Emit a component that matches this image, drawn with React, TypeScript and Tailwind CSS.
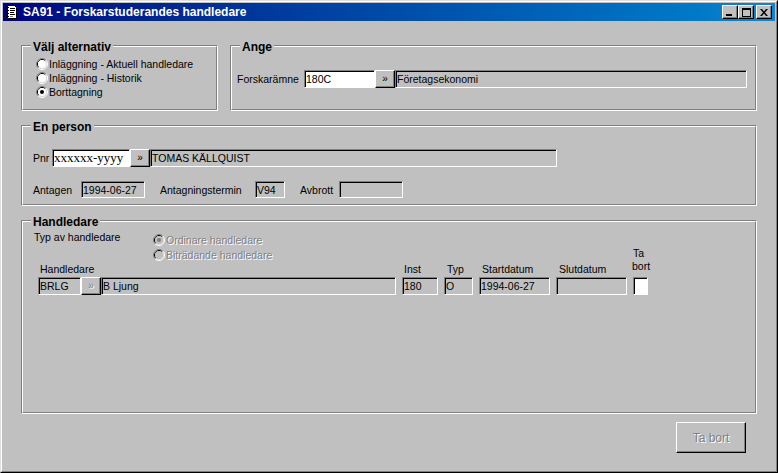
import React from "react";

const sunken =
  "border border-t-[#808080] border-l-[#808080] border-r-white border-b-white shadow-[inset_1px_1px_0_#000]";
const raised =
  "border border-t-white border-l-white border-r-black border-b-black shadow-[inset_-1px_-1px_0_#808080]";

function Field({
  className = "",
  white = false,
  children,
}: {
  className?: string;
  white?: boolean;
  children?: React.ReactNode;
}) {
  return (
    <div
      className={`${sunken} ${white ? "bg-white" : "bg-[#c0c0c0]"} flex items-center pl-[1px] overflow-hidden whitespace-nowrap shrink-0 ${className}`}
    >
      {children}
    </div>
  );
}

function MoreBtn({ disabled = false }: { disabled?: boolean }) {
  return (
    <div
      className={`${raised} bg-[#c0c0c0] w-[20px] h-[18px] shrink-0 flex items-center justify-center text-[10px] leading-none ${
        disabled ? "text-[#808080] [text-shadow:1px_1px_0_#fff]" : "text-black"
      }`}
    >
      »
    </div>
  );
}

function Radio({ checked = false, disabled = false }: { checked?: boolean; disabled?: boolean }) {
  return (
    <svg width="12" height="12" viewBox="0 0 12 12" className="shrink-0">
      <path d="M2.11 9.89A5.5 5.5 0 0 1 9.89 2.11" stroke="#808080" fill="none" />
      <path d="M9.89 2.11A5.5 5.5 0 0 1 2.11 9.89" stroke="#fff" fill="none" />
      <path d="M2.82 9.18A4.5 4.5 0 0 1 9.18 2.82" stroke="#000" fill="none" />
      <path d="M9.18 2.82A4.5 4.5 0 0 1 2.82 9.18" stroke="#dfdfdf" fill="none" />
      <circle cx="6" cy="6" r="4" fill={disabled ? "#c0c0c0" : "#fff"} />
      {checked && <circle cx="6" cy="6" r="2" fill={disabled ? "#808080" : "#000"} />}
    </svg>
  );
}

function Group({
  title,
  className = "",
  children,
}: {
  title: string;
  className?: string;
  children?: React.ReactNode;
}) {
  return (
    <div
      className={`border border-t-[#808080] border-l-[#808080] border-r-white border-b-white shrink-0 ${className}`}
    >
      <div className="h-full flex flex-col border border-t-white border-l-white border-r-[#808080] border-b-[#808080]">
        <span className="-mt-[7px] ml-[8px] px-[2px] self-start bg-[#c0c0c0] text-[12px] leading-[14px] font-bold">
          {title}
        </span>
        {children}
      </div>
    </div>
  );
}

function TitleBar() {
  return (
    <div className="h-[18px] shrink-0 flex items-center bg-linear-to-r from-[#000080] to-[#1084d0] pl-[1px] pr-[3px]">
      <svg width="16" height="16" viewBox="0 0 16 16" className="shrink-0">
        <path d="M3.5 1.5h7l2 2v11h-9z" fill="#fff" stroke="#000" />
        <rect x="2" y="3" width="3" height="1" fill="#000" />
        <rect x="2" y="6" width="3" height="1" fill="#000" />
        <rect x="2" y="9" width="3" height="1" fill="#000" />
        <rect x="2" y="12" width="3" height="1" fill="#000" />
        <rect x="6" y="4" width="5" height="1" fill="#000" />
        <rect x="6" y="6" width="5" height="1" fill="#000" />
        <rect x="6" y="8" width="4" height="1" fill="#000" />
        <rect x="6" y="10" width="5" height="1" fill="#000" />
        <rect x="6" y="12" width="3" height="1" fill="#808080" />
      </svg>
      <span className="ml-[3px] text-white font-bold text-[12px] leading-none whitespace-nowrap">
        SA91 - Forskarstuderandes handledare
      </span>
      <div className="ml-auto flex items-center">
        <div className={`${raised} bg-[#c0c0c0] w-[16px] h-[14px] flex items-end justify-start pl-[3px] pb-[2px]`}>
          <svg width="6" height="2" viewBox="0 0 6 2">
            <rect width="6" height="2" fill="#000" />
          </svg>
        </div>
        <div className={`${raised} bg-[#c0c0c0] w-[16px] h-[14px] flex items-center justify-center`}>
          <svg width="9" height="9" viewBox="0 0 9 9">
            <path d="M0 0h9v9H0zM1 2v6h7V2z" fill="#000" fillRule="evenodd" />
          </svg>
        </div>
        <div className={`${raised} bg-[#c0c0c0] w-[16px] h-[14px] ml-[2px] flex items-center justify-center`}>
          <svg width="8" height="7" viewBox="0 0 8 7">
            <path d="M0 0h2l2 2.4L6 0h2L5 3.5 8 7H6L4 4.6 2 7H0l3-3.5z" fill="#000" />
          </svg>
        </div>
      </div>
    </div>
  );
}

const options = [
  { label: "Inläggning - Aktuell handledare", checked: false },
  { label: "Inläggning - Historik", checked: false },
  { label: "Borttagning", checked: true },
];

export default function App() {
  return (
    <div className="w-[778px] h-[473px] bg-[#c0c0c0] font-['Liberation_Sans',Arial,sans-serif] text-[10.5px] leading-[12px] text-black border border-t-[#dfdfdf] border-l-[#dfdfdf] border-r-black border-b-black">
      <div className="h-full flex flex-col border border-t-white border-l-white border-r-[#808080] border-b-[#808080] p-[1px]">
        <TitleBar />

        <div className="flex flex-col px-[18px] pt-[24px]">
          {/* row 1 */}
          <div className="flex gap-[12px]">
            <Group title="Välj alternativ" className="w-[197px] h-[66px]">
              <div className="flex flex-col pt-[3px] pl-[13px]">
                {options.map((o) => (
                  <div key={o.label} className="h-[14px] flex items-center gap-[1px] whitespace-nowrap">
                    <Radio checked={o.checked} />
                    <span>{o.label}</span>
                  </div>
                ))}
              </div>
            </Group>

            <Group title="Ange" className="flex-1 h-[66px]">
              <div className="flex items-center pt-[16px] pl-[5px]">
                <span className="w-[67px] shrink-0">Forskarämne</span>
                <Field white className="w-[71px] h-[18px]">
                  180C
                </Field>
                <MoreBtn />
                <Field className="w-[352px] h-[18px]">Företagsekonomi</Field>
              </div>
            </Group>
          </div>

          {/* En person */}
          <Group title="En person" className="mt-[14px] h-[81px]">
            <div className="flex flex-col pt-[15px] pl-[10px]">
              <div className="flex items-center">
                <span className="w-[19px] shrink-0">Pnr</span>
                <Field white className="w-[78px] h-[18px] font-['Liberation_Serif',serif] text-[13px]">
                  xxxxxx-yyyy
                </Field>
                <MoreBtn />
                <Field className="w-[407px] h-[18px]">TOMAS KÄLLQUIST</Field>
              </div>
              <div className="flex items-center mt-[14px]">
                <span className="w-[48px] shrink-0">Antagen</span>
                <Field className="w-[64px] h-[17px]">1994-06-27</Field>
                <span className="w-[95px] shrink-0 pl-[15px] box-content">Antagningstermin</span>
                <Field className="w-[30px] h-[17px]">V94</Field>
                <span className="w-[39px] shrink-0 pl-[15px] box-content">Avbrott</span>
                <Field className="w-[64px] h-[17px]" />
              </div>
            </div>
          </Group>

          {/* Handledare */}
          <Group title="Handledare" className="mt-[14px] h-[194px]">
            <div className="flex flex-col pt-[2px]">
              <div className="flex pl-[11px]">
                <span className="w-[119px] shrink-0">Typ av handledare</span>
                <div className="flex flex-col mt-[1px] text-[#808080] [text-shadow:1px_1px_0_#fff]">
                  <div className="h-[15px] flex items-center gap-[1px]">
                    <Radio checked disabled />
                    <span>Ordinare handledare</span>
                  </div>
                  <div className="h-[15px] flex items-center gap-[1px]">
                    <Radio disabled />
                    <span>Biträdande handledare</span>
                  </div>
                </div>
              </div>

              <div className="grid grid-cols-[358px_36px_29px_71px_71px_15px] gap-x-[6px] gap-y-[2px] items-end pl-[15px] mt-[1px]">
                <span className="pl-[2px]">Handledare</span>
                <span className="pl-[2px]">Inst</span>
                <span className="pl-[3px]">Typ</span>
                <span className="pl-[3px]">Startdatum</span>
                <span className="pl-[3px] whitespace-nowrap">Slutdatum</span>
                <span className="-mt-[16px] mb-[2px] leading-[13px] whitespace-nowrap">
                  Ta
                  <br />
                  <span className="-ml-[1px]">bort</span>
                </span>

                <div className="flex">
                  <Field className="w-[43px] h-[18px]">BRLG</Field>
                  <MoreBtn disabled />
                  <Field className="w-[295px] h-[18px]">B Ljung</Field>
                </div>
                <Field className="w-[36px] h-[18px]">180</Field>
                <Field className="w-[29px] h-[18px]">O</Field>
                <Field className="w-[71px] h-[18px]">1994-06-27</Field>
                <Field className="w-[71px] h-[18px]" />
                <Field white className="w-[15px] h-[18px]" />
              </div>
            </div>
          </Group>

          <div className="flex justify-end pr-[11px] mt-[8px]">
            <div
              className={`${raised} bg-[#c0c0c0] w-[70px] h-[31px] flex items-center justify-center text-[12px] text-[#808080] [text-shadow:1px_1px_0_#fff]`}
            >
              Ta bort
            </div>
          </div>
        </div>
      </div>
    </div>
  );
}
